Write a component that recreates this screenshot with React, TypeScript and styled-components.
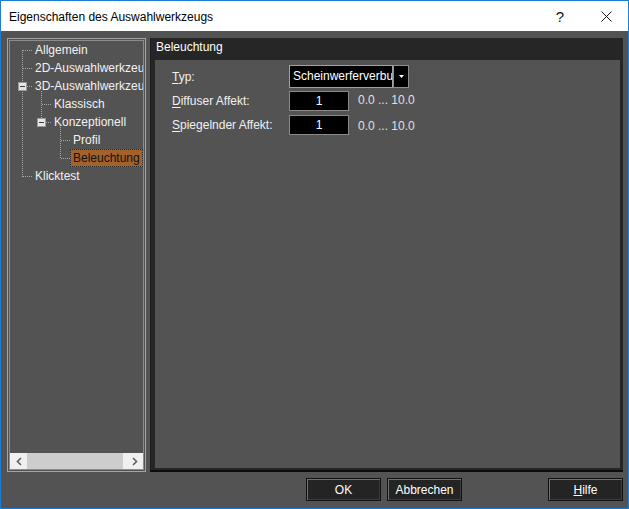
import React from "react"
import styled, { createGlobalStyle } from "styled-components"

const GlobalStyle = createGlobalStyle`
	html, body {
		margin: 0;
		padding: 0;
		background: #ffffff;
	}
	body {
		font-family: "Liberation Sans", Arial, sans-serif;
		font-size: 12px;
	}
`

type TreeItem = {
	label: string
	level: number
	selected?: boolean
}

const treeItems: TreeItem[] = [
	{ label: "Allgemein", level: 0 },
	{ label: "2D-Auswahlwerkzeug", level: 0 },
	{ label: "3D-Auswahlwerkzeug", level: 0 },
	{ label: "Klassisch", level: 1 },
	{ label: "Konzeptionell", level: 1 },
	{ label: "Profil", level: 2 },
	{ label: "Beleuchtung", level: 2, selected: true },
	{ label: "Klicktest", level: 0 }
]

const TreeLines = () => (
	<LinesSvg width="133" height="160" viewBox="0 0 133 160">
		<g stroke="#a8a8a8" strokeWidth="1" strokeDasharray="1 1" fill="none">
			<line x1="12.5" y1="9" x2="12.5" y2="136" />
			<line x1="13" y1="9.5" x2="23" y2="9.5" />
			<line x1="13" y1="27.5" x2="23" y2="27.5" />
			<line x1="17" y1="45.5" x2="23" y2="45.5" />
			<line x1="13" y1="135.5" x2="23" y2="135.5" />
			<line x1="31.5" y1="50" x2="31.5" y2="81" />
			<line x1="32" y1="63.5" x2="42" y2="63.5" />
			<line x1="36" y1="81.5" x2="42" y2="81.5" />
			<line x1="50.5" y1="86" x2="50.5" y2="118" />
			<line x1="51" y1="99.5" x2="61" y2="99.5" />
			<line x1="51" y1="117.5" x2="61" y2="117.5" />
		</g>
		{[
			[12, 45],
			[31, 81]
		].map(([cx, cy]) => (
			<g key={cx}>
				<rect
					x={cx - 4 + 0.5}
					y={cy - 4 + 0.5}
					width="8"
					height="8"
					fill="#e6e6e6"
					stroke="#9a9a9a"
				/>
				<line
					x1={cx - 2}
					y1={cy + 0.5}
					x2={cx + 3}
					y2={cy + 0.5}
					stroke="#3c3c3c"
				/>
			</g>
		))}
	</LinesSvg>
)

const Chevron = ({ dir }: { dir: "left" | "right" }) => (
	<svg width="6" height="9" viewBox="0 0 6 9">
		<path
			d={dir === "left" ? "M5 1 L1.5 4.5 L5 8" : "M1 1 L4.5 4.5 L1 8"}
			stroke="#606060"
			strokeWidth="1.6"
			fill="none"
		/>
	</svg>
)

const App = () => {
	return (
		<>
			<GlobalStyle />
			<Window>
				<TitleBar>
					<Title>Eigenschaften des Auswahlwerkzeugs</Title>
					<TitleButtons>
						<HelpGlyph>?</HelpGlyph>
						<svg width="11" height="11" viewBox="0 0 11 11">
							<path d="M0.5 0.5 L10.5 10.5 M10.5 0.5 L0.5 10.5" stroke="#111" strokeWidth="1" />
						</svg>
					</TitleButtons>
				</TitleBar>
				<Body>
					<MainRow>
						<TreeFrame>
							<TreeInner>
								<TreeBody>
									<TreeLines />
									{treeItems.map((item) => (
										<TreeRow key={item.label} $level={item.level}>
											<TreeLabel $selected={item.selected}>{item.label}</TreeLabel>
										</TreeRow>
									))}
								</TreeBody>
								<HScroll>
									<ScrollArrow>
										<Chevron dir="left" />
									</ScrollArrow>
									<ScrollTrack>
										<ScrollThumb />
									</ScrollTrack>
									<ScrollArrow>
										<Chevron dir="right" />
									</ScrollArrow>
								</HScroll>
							</TreeInner>
						</TreeFrame>
						<PagePanel>
							<PageHeader>Beleuchtung</PageHeader>
							<PageContent>
								<FormGrid>
									<FieldLabel>
										<u>T</u>yp:
									</FieldLabel>
									<Combo>
										<ComboText>Scheinwerferverbund</ComboText>
										<ComboButton>
											<svg width="5" height="3" viewBox="0 0 5 3">
												<path d="M0 0 H5 L2.5 3 Z" fill="#ffffff" />
											</svg>
										</ComboButton>
									</Combo>
									<FieldLabel>
										<u>D</u>iffuser Affekt:
									</FieldLabel>
									<NumberBox>1</NumberBox>
									<RangeText $shift={-1}>0.0 ... 10.0</RangeText>
									<FieldLabel>
										<u>S</u>piegelnder Affekt:
									</FieldLabel>
									<NumberBox>1</NumberBox>
									<RangeText $shift={2}>0.0 ... 10.0</RangeText>
								</FormGrid>
							</PageContent>
						</PagePanel>
					</MainRow>
					<ButtonBar>
						<DialogButton>OK</DialogButton>
						<DialogButton>Abbrechen</DialogButton>
						<DialogButton $gapLeft={86}>
							<u>H</u>ilfe
						</DialogButton>
					</ButtonBar>
				</Body>
			</Window>
		</>
	)
}

const Window = styled.div`
	box-sizing: border-box;
	width: 629px;
	height: 509px;
	border: 1px solid #1a7dd6;
	display: flex;
	flex-direction: column;
	overflow: hidden;
`

const TitleBar = styled.div`
	height: 30px;
	flex: none;
	background: #ffffff;
	display: flex;
	align-items: center;
	justify-content: space-between;
	padding: 0 16px 0 8px;
`

const Title = styled.span`
	color: #000000;
	font-size: 12px;
	margin-top: 1px;
`

const TitleButtons = styled.div`
	display: flex;
	align-items: center;
	gap: 37px;
`

const HelpGlyph = styled.span`
	font-family: "Liberation Sans", Arial, sans-serif;
	font-size: 15px;
	color: #111;
`

const Body = styled.div`
	flex: 1;
	background: #535353;
	padding: 7px 5px 7px 6px;
	display: flex;
	flex-direction: column;
	gap: 6px;
	min-height: 0;
`

const MainRow = styled.div`
	height: 434px;
	display: flex;
	gap: 4px;
`

const TreeFrame = styled.div`
	box-sizing: border-box;
	width: 139px;
	border: 1px solid #a4a4a4;
	padding: 1px;
	display: flex;
`

const TreeInner = styled.div`
	flex: 1;
	border: 1px solid #8c8c8c;
	display: flex;
	flex-direction: column;
	min-width: 0;
`

const TreeBody = styled.div`
	position: relative;
	flex: 1;
	overflow: hidden;
`

const LinesSvg = styled.svg`
	position: absolute;
	left: 0;
	top: 0;
`

const TreeRow = styled.div<{ $level: number }>`
	position: relative;
	height: 18px;
	display: flex;
	align-items: center;
	padding-left: ${(p) => 25 + p.$level * 19}px;
	white-space: nowrap;
`

const TreeLabel = styled.span<{ $selected?: boolean }>`
	color: ${(p) => (p.$selected ? "#111111" : "#f2f2f2")};
	background: ${(p) => (p.$selected ? "#a3622b" : "transparent")};
	outline: ${(p) => (p.$selected ? "1px dotted #2a2a2a" : "none")};
	outline-offset: -1px;
	line-height: 18px;
	padding: 0 3px;
	margin-left: -3px;
`

const HScroll = styled.div`
	height: 16px;
	flex: none;
	background: #f0f0f0;
	display: flex;
	align-items: stretch;
`

const ScrollArrow = styled.div`
	width: 17px;
	display: flex;
	align-items: center;
	justify-content: center;
`

const ScrollTrack = styled.div`
	flex: 1;
	display: flex;
	align-items: stretch;
`

const ScrollThumb = styled.div`
	width: 96px;
	background: #cdcdcd;
`

const PagePanel = styled.div`
	flex: 1;
	box-sizing: border-box;
	background: #262626;
	border-left: 1px solid #1c1c1c;
	border-bottom: 2px solid #0c0c0c;
	padding: 0 3px 2px 4px;
	display: flex;
	flex-direction: column;
`

const PageHeader = styled.div`
	height: 22px;
	line-height: 19px;
	padding-left: 1px;
	color: #ffffff;
	font-size: 12px;
`

const PageContent = styled.div`
	flex: 1;
	background: #535353;
`

const FormGrid = styled.div`
	display: grid;
	grid-template-columns: 117px 60px 1fr;
	grid-template-rows: 23px 20px 20px;
	row-gap: 3px;
	align-items: center;
	padding: 5px 0 0 17px;
	& > :nth-child(6),
	& > :nth-child(7) {
		margin-top: 1px;
	}
`

const FieldLabel = styled.span`
	color: #f0f0f0;
	font-size: 12px;

	u {
		text-underline-offset: 2px;
	}
`

const Combo = styled.div`
	grid-column: span 2;
	display: flex;
	height: 23px;
	width: 120px;
`

const ComboText = styled.div`
	box-sizing: border-box;
	width: 104px;
	background: #000000;
	border: 1px solid #a0a0a0;
	color: #ffffff;
	font-size: 12px;
	line-height: 21px;
	padding-left: 3px;
	overflow: hidden;
	white-space: nowrap;
`

const ComboButton = styled.div`
	box-sizing: border-box;
	width: 16px;
	background: #000000;
	border: 1px solid #8e8e8e;
	display: flex;
	align-items: center;
	justify-content: center;
`

const NumberBox = styled.div`
	box-sizing: border-box;
	width: 60px;
	height: 20px;
	background: #000000;
	border: 1px solid #8a8a8a;
	color: #ffffff;
	font-size: 12px;
	line-height: 18px;
	text-align: center;
`

const RangeText = styled.span<{ $shift: number }>`
	color: #e0e0e0;
	font-size: 12px;
	padding-left: 9px;
	position: relative;
	top: ${(p) => p.$shift}px;
`

const ButtonBar = styled.div`
	display: flex;
	justify-content: flex-end;
	gap: 6px;
	height: 23px;
`

const DialogButton = styled.button<{ $gapLeft?: number }>`
	box-sizing: border-box;
	width: 75px;
	height: 23px;
	margin-left: ${(p) => (p.$gapLeft ? p.$gapLeft - 6 : 0)}px;
	background: #242424;
	border: 1px solid #111111;
	box-shadow: inset 1px 1px 0 #707070, inset -1px -1px 0 #3c3c3c;
	color: #ffffff;
	font-family: "Liberation Sans", Arial, sans-serif;
	font-size: 12px;
	padding: 0;
	cursor: default;
`

export default App
